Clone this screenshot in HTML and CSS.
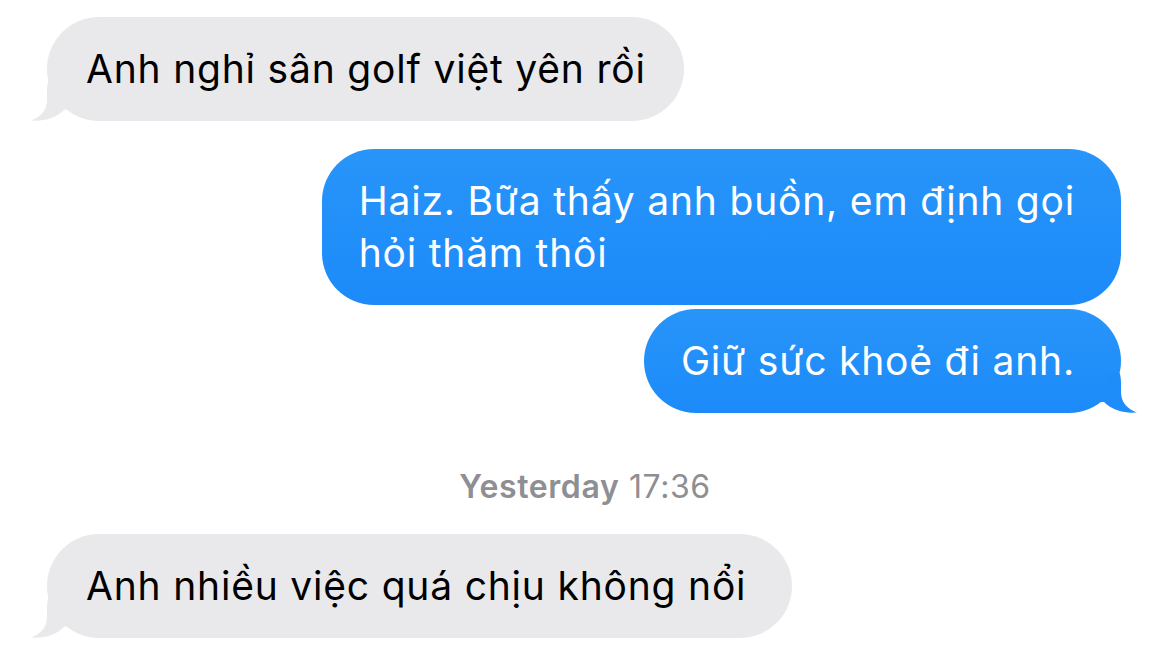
FILE: index.html
```html
<!DOCTYPE html>
<html lang="vi">
<head>
<meta charset="utf-8">
<title>Messages</title>
<link rel="stylesheet" href="styles.css">
</head>
<body>
<div class="chat">
  <div class="row in">
    <div class="bubble gray">Anh nghỉ sân golf việt yên rồi
      <svg class="tail tail-left" width="44" height="40" viewBox="0 0 44 40"><path d="M18.4 0 C17.4 3 17 6 17 10 L17 19 C17 29 11 36 1 39.5 C14 40.5 26 37 34 29 C37 27 40 28 44 30 L44 0 Z" fill="#e9e9eb"/></svg>
    </div>
  </div>
  <div class="row out group-start">
    <div class="bubble blue">Haiz. Bữa thấy anh buồn, em định gọi<br>hỏi thăm thôi</div>
  </div>
  <div class="row out tight">
    <div class="bubble blue">Giữ sức khoẻ đi anh.
      <svg class="tail tail-right" width="44" height="40" viewBox="0 0 44 40"><path d="M18 0 L25.6 0 C26.6 3 27 6 27 10 L27 19 C27 29 33 36 43 39.5 C30 40.5 18 37 10 29 L4 29 Z" fill="#1e8cf9"/></svg>
    </div>
  </div>
  <div class="stamp"><span class="day">Yesterday</span> 17:36</div>
  <div class="row in">
    <div class="bubble gray last">Anh nhiều việc quá chịu không nổi
      <svg class="tail tail-left" width="44" height="40" viewBox="0 0 44 40"><path d="M18.4 0 C17.4 3 17 6 17 10 L17 19 C17 29 11 36 1 39.5 C14 40.5 26 37 34 29 C37 27 40 28 44 30 L44 0 Z" fill="#e9e9eb"/></svg>
    </div>
  </div>
</div>
</body>
</html>
```

FILE: styles.css
```css
* { box-sizing: border-box; }
html, body {
  margin: 0;
  padding: 0;
  background: #ffffff;
}
body {
  width: 1170px;
  height: 653px;
  overflow: hidden;
  font-family: Inter, "Noto Sans", "Liberation Sans", sans-serif;
}
.chat {
  display: flex;
  flex-direction: column;
  padding-top: 17px;
}
.row {
  display: flex;
}
.row.in {
  justify-content: flex-start;
  padding-left: 47px;
}
.row.out {
  justify-content: flex-end;
  padding-right: 49px;
}
.row.group-start {
  margin-top: 28px;
}
.row.tight {
  margin-top: 4px;
}
.bubble {
  position: relative;
  font-size: 39px;
  line-height: 52px;
  border-radius: 52px;
  letter-spacing: 0.8px;
  white-space: nowrap;
}
.bubble.gray {
  background: #e9e9eb;
  color: #000000;
  padding: 26px 38px 26px 39px;
}
.bubble.gray.last {
  padding-right: 46px;
}
.bubble.blue {
  background: linear-gradient(#2895fa, #1c8af9);
  color: #ffffff;
  padding: 26px 46px 26px 37px;
}
.tail {
  position: absolute;
  bottom: 0;
}
.tail-left {
  left: -17px;
}
.tail-right {
  right: -17px;
}
.stamp {
  text-align: center;
  font-size: 32px;
  letter-spacing: 0.6px;
  color: #8e8e93;
  margin-top: 56px;
  margin-bottom: 29px;
  line-height: 36px;
}
.stamp .day {
  font-weight: 600;
}
```
